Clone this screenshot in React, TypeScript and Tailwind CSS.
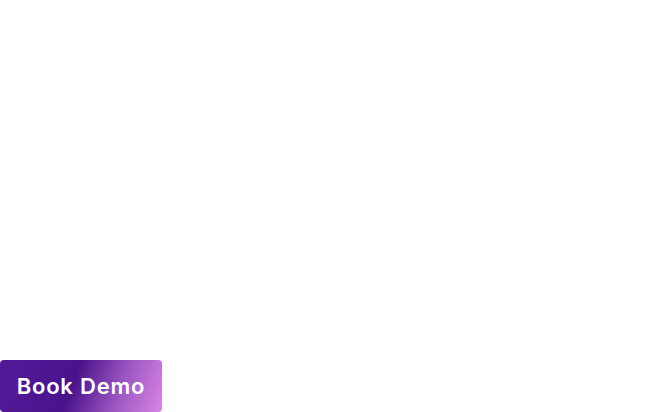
export default function App() {
  return (
    <div className="h-[412px] w-full bg-white flex flex-col justify-end items-start">
      <button
        className="h-[52px] w-[162px] rounded-[4px] flex items-center justify-center text-white text-[22px] font-semibold tracking-[0.8px] bg-[linear-gradient(110deg,#54199a_0%,#4a138a_45%,#9a55c0_72%,#d985e5_100%)]"
        style={{ fontFamily: 'Inter, "Noto Sans", sans-serif' }}
      >
        Book Demo
      </button>
    </div>
  );
}
